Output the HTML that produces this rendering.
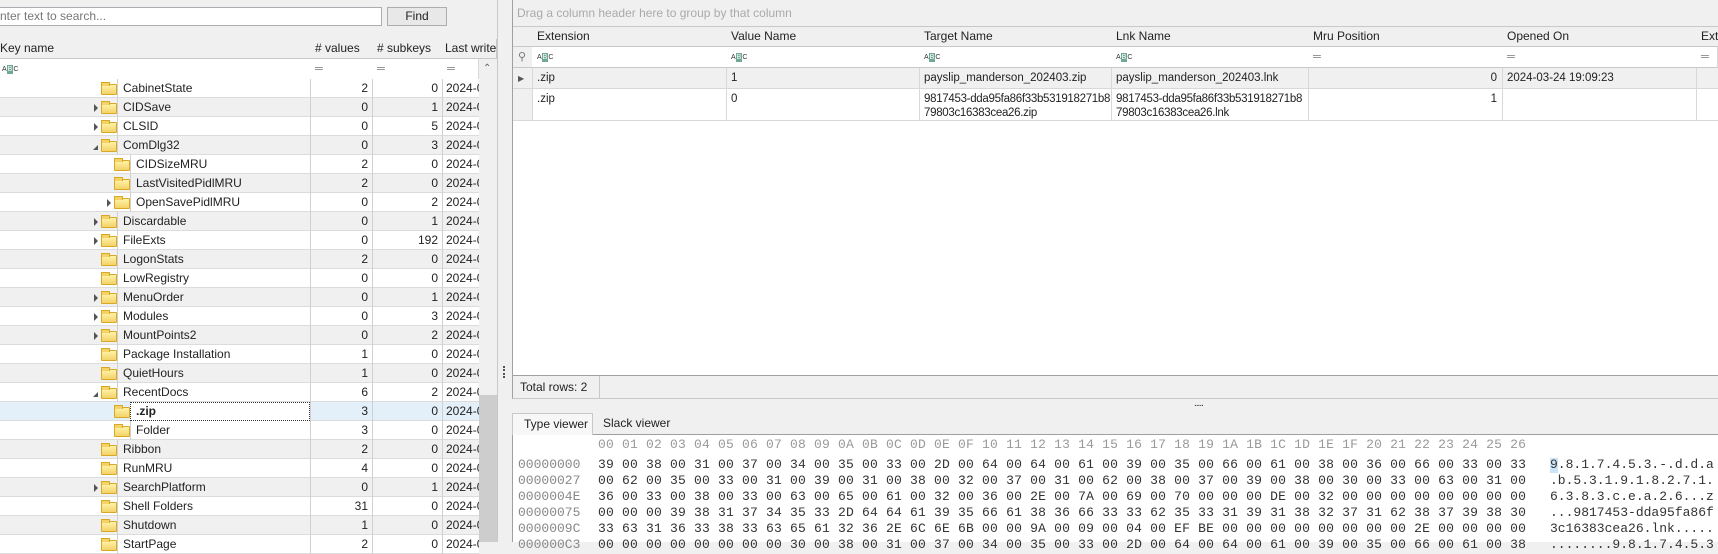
<!DOCTYPE html>
<html><head><meta charset="utf-8"><style>
*{margin:0;padding:0;box-sizing:border-box}
body{width:1718px;height:542px;overflow:hidden;background:#f0f0f0;font-family:"Liberation Sans",sans-serif;font-size:12px;color:#222;position:relative}
.a{position:absolute;white-space:nowrap}
.row{position:absolute;left:0;width:479px;height:19px;border-bottom:1px solid #dcdcdc}
.row .c{position:absolute;top:0;height:19px;line-height:18px;border-left:1px solid #d0d0d0;overflow:hidden;white-space:nowrap}
.fold{position:absolute;top:5px;width:16px;height:11px;background:linear-gradient(#fff3a8,#f3d268);border:1px solid #d9a925;border-radius:1px}
.fold:before{content:"";position:absolute;left:-1px;top:-3px;width:7px;height:3px;background:#f3d268;border:1px solid #d9a925;border-bottom:none}
.tri{position:absolute;top:6px;width:0;height:0;border-top:4px solid transparent;border-bottom:4px solid transparent;border-left:4px solid #555}
.tri.o{border:none;top:9px;width:0;height:0;border-left:5px solid transparent;border-bottom:5px solid #555}
.hdr{position:absolute;background:#f0f0f0;border-right:1px solid #c8c8c8;border-bottom:1px solid #c8c8c8;height:20px;line-height:19px;padding-left:5px;color:#222;overflow:hidden;white-space:nowrap}
.flt{position:absolute;background:#fff;border-right:1px solid #d8d8d8;border-bottom:1px solid #c8c8c8;height:21px;line-height:20px;padding-left:5px;color:#777;font-size:11px;overflow:hidden}
.abc{position:relative;display:inline-block;font-size:7px;line-height:9px;height:9px;color:#333;vertical-align:middle;font-family:"Liberation Sans",sans-serif}
.abc b{display:inline-block;background:#6fa893;color:#fff;padding:0 1px;font-weight:normal;line-height:9px;height:9px}
.g{position:absolute;border-right:1px solid #d8d8d8;border-bottom:1px solid #d8d8d8;padding:3px 5px;line-height:14px;font-size:11.5px;overflow:hidden;white-space:nowrap}
.mono{font-family:"Liberation Mono",monospace;font-size:13px;white-space:pre;position:absolute;color:#333;letter-spacing:0.2px}
</style></head><body>
<!-- left search -->
<div class="a" style="left:0;top:7px;width:382px;height:19px;background:#fff;border:1px solid #abadb3;border-left:none;color:#777;line-height:17px">nter text to search...</div>
<div class="a" style="left:387px;top:7px;width:60px;height:19px;background:#e8e8e8;border:1px solid #adadad;text-align:center;line-height:17px">Find</div>
<!-- left header -->
<div class="hdr" style="left:0;top:39px;width:311px;padding-left:0">Key name</div>
<div class="hdr" style="left:310px;top:39px;width:63px">&#35; values</div>
<div class="hdr" style="left:372px;top:39px;width:71px">&#35; subkeys</div>
<div class="hdr" style="left:442px;top:39px;width:55px;padding-left:3px">Last write</div>
<div class="flt" style="left:0;top:59px;width:311px;padding-left:2px"><span class="abc">A<b>B</b>C</span></div>
<div class="flt" style="left:310px;top:59px;width:63px">═</div>
<div class="flt" style="left:372px;top:59px;width:71px">═</div>
<div class="flt" style="left:442px;top:59px;width:37px">═</div>

<div id="tree">
<div class="row" style="top:79px;background:#fff"><div class="fold" style="left:101px"></div><div class="c" style="left:117px;width:193px;padding-left:5px">CabinetState</div><div class="c" style="left:310px;width:62px;text-align:right;padding-right:4px">2</div><div class="c" style="left:372px;width:70px;text-align:right;padding-right:4px">0</div><div class="c" style="left:442px;width:37px;padding-left:3px">2024-0</div></div>
<div class="row" style="top:98px;background:#f0f0f0"><div class="tri" style="left:94px"></div><div class="fold" style="left:101px"></div><div class="c" style="left:117px;width:193px;padding-left:5px">CIDSave</div><div class="c" style="left:310px;width:62px;text-align:right;padding-right:4px">0</div><div class="c" style="left:372px;width:70px;text-align:right;padding-right:4px">1</div><div class="c" style="left:442px;width:37px;padding-left:3px">2024-0</div></div>
<div class="row" style="top:117px;background:#fff"><div class="tri" style="left:94px"></div><div class="fold" style="left:101px"></div><div class="c" style="left:117px;width:193px;padding-left:5px">CLSID</div><div class="c" style="left:310px;width:62px;text-align:right;padding-right:4px">0</div><div class="c" style="left:372px;width:70px;text-align:right;padding-right:4px">5</div><div class="c" style="left:442px;width:37px;padding-left:3px">2024-0</div></div>
<div class="row" style="top:136px;background:#f0f0f0"><div class="tri o" style="left:93px"></div><div class="fold" style="left:101px"></div><div class="c" style="left:117px;width:193px;padding-left:5px">ComDlg32</div><div class="c" style="left:310px;width:62px;text-align:right;padding-right:4px">0</div><div class="c" style="left:372px;width:70px;text-align:right;padding-right:4px">3</div><div class="c" style="left:442px;width:37px;padding-left:3px">2024-0</div></div>
<div class="row" style="top:155px;background:#fff"><div class="fold" style="left:114px"></div><div class="c" style="left:130px;width:180px;padding-left:5px">CIDSizeMRU</div><div class="c" style="left:310px;width:62px;text-align:right;padding-right:4px">2</div><div class="c" style="left:372px;width:70px;text-align:right;padding-right:4px">0</div><div class="c" style="left:442px;width:37px;padding-left:3px">2024-0</div></div>
<div class="row" style="top:174px;background:#f0f0f0"><div class="fold" style="left:114px"></div><div class="c" style="left:130px;width:180px;padding-left:5px">LastVisitedPidlMRU</div><div class="c" style="left:310px;width:62px;text-align:right;padding-right:4px">2</div><div class="c" style="left:372px;width:70px;text-align:right;padding-right:4px">0</div><div class="c" style="left:442px;width:37px;padding-left:3px">2024-0</div></div>
<div class="row" style="top:193px;background:#fff"><div class="tri" style="left:107px"></div><div class="fold" style="left:114px"></div><div class="c" style="left:130px;width:180px;padding-left:5px">OpenSavePidlMRU</div><div class="c" style="left:310px;width:62px;text-align:right;padding-right:4px">0</div><div class="c" style="left:372px;width:70px;text-align:right;padding-right:4px">2</div><div class="c" style="left:442px;width:37px;padding-left:3px">2024-0</div></div>
<div class="row" style="top:212px;background:#f0f0f0"><div class="tri" style="left:94px"></div><div class="fold" style="left:101px"></div><div class="c" style="left:117px;width:193px;padding-left:5px">Discardable</div><div class="c" style="left:310px;width:62px;text-align:right;padding-right:4px">0</div><div class="c" style="left:372px;width:70px;text-align:right;padding-right:4px">1</div><div class="c" style="left:442px;width:37px;padding-left:3px">2024-0</div></div>
<div class="row" style="top:231px;background:#fff"><div class="tri" style="left:94px"></div><div class="fold" style="left:101px"></div><div class="c" style="left:117px;width:193px;padding-left:5px">FileExts</div><div class="c" style="left:310px;width:62px;text-align:right;padding-right:4px">0</div><div class="c" style="left:372px;width:70px;text-align:right;padding-right:4px">192</div><div class="c" style="left:442px;width:37px;padding-left:3px">2024-0</div></div>
<div class="row" style="top:250px;background:#f0f0f0"><div class="fold" style="left:101px"></div><div class="c" style="left:117px;width:193px;padding-left:5px">LogonStats</div><div class="c" style="left:310px;width:62px;text-align:right;padding-right:4px">2</div><div class="c" style="left:372px;width:70px;text-align:right;padding-right:4px">0</div><div class="c" style="left:442px;width:37px;padding-left:3px">2024-0</div></div>
<div class="row" style="top:269px;background:#fff"><div class="fold" style="left:101px"></div><div class="c" style="left:117px;width:193px;padding-left:5px">LowRegistry</div><div class="c" style="left:310px;width:62px;text-align:right;padding-right:4px">0</div><div class="c" style="left:372px;width:70px;text-align:right;padding-right:4px">0</div><div class="c" style="left:442px;width:37px;padding-left:3px">2024-0</div></div>
<div class="row" style="top:288px;background:#f0f0f0"><div class="tri" style="left:94px"></div><div class="fold" style="left:101px"></div><div class="c" style="left:117px;width:193px;padding-left:5px">MenuOrder</div><div class="c" style="left:310px;width:62px;text-align:right;padding-right:4px">0</div><div class="c" style="left:372px;width:70px;text-align:right;padding-right:4px">1</div><div class="c" style="left:442px;width:37px;padding-left:3px">2024-0</div></div>
<div class="row" style="top:307px;background:#fff"><div class="tri" style="left:94px"></div><div class="fold" style="left:101px"></div><div class="c" style="left:117px;width:193px;padding-left:5px">Modules</div><div class="c" style="left:310px;width:62px;text-align:right;padding-right:4px">0</div><div class="c" style="left:372px;width:70px;text-align:right;padding-right:4px">3</div><div class="c" style="left:442px;width:37px;padding-left:3px">2024-0</div></div>
<div class="row" style="top:326px;background:#f0f0f0"><div class="tri" style="left:94px"></div><div class="fold" style="left:101px"></div><div class="c" style="left:117px;width:193px;padding-left:5px">MountPoints2</div><div class="c" style="left:310px;width:62px;text-align:right;padding-right:4px">0</div><div class="c" style="left:372px;width:70px;text-align:right;padding-right:4px">2</div><div class="c" style="left:442px;width:37px;padding-left:3px">2024-0</div></div>
<div class="row" style="top:345px;background:#fff"><div class="fold" style="left:101px"></div><div class="c" style="left:117px;width:193px;padding-left:5px">Package Installation</div><div class="c" style="left:310px;width:62px;text-align:right;padding-right:4px">1</div><div class="c" style="left:372px;width:70px;text-align:right;padding-right:4px">0</div><div class="c" style="left:442px;width:37px;padding-left:3px">2024-0</div></div>
<div class="row" style="top:364px;background:#f0f0f0"><div class="fold" style="left:101px"></div><div class="c" style="left:117px;width:193px;padding-left:5px">QuietHours</div><div class="c" style="left:310px;width:62px;text-align:right;padding-right:4px">1</div><div class="c" style="left:372px;width:70px;text-align:right;padding-right:4px">0</div><div class="c" style="left:442px;width:37px;padding-left:3px">2024-0</div></div>
<div class="row" style="top:383px;background:#fff"><div class="tri o" style="left:93px"></div><div class="fold" style="left:101px"></div><div class="c" style="left:117px;width:193px;padding-left:5px">RecentDocs</div><div class="c" style="left:310px;width:62px;text-align:right;padding-right:4px">6</div><div class="c" style="left:372px;width:70px;text-align:right;padding-right:4px">2</div><div class="c" style="left:442px;width:37px;padding-left:3px">2024-0</div></div>
<div class="row" style="top:402px;background:#e3eff9"><div class="fold" style="left:114px"></div><div class="c" style="left:130px;width:180px;padding-left:5px;font-weight:bold;background:#fff;border:1px dotted #333;line-height:16px">.zip</div><div class="c" style="left:310px;width:62px;text-align:right;padding-right:4px">3</div><div class="c" style="left:372px;width:70px;text-align:right;padding-right:4px">0</div><div class="c" style="left:442px;width:37px;padding-left:3px">2024-0</div></div>
<div class="row" style="top:421px;background:#fff"><div class="fold" style="left:114px"></div><div class="c" style="left:130px;width:180px;padding-left:5px">Folder</div><div class="c" style="left:310px;width:62px;text-align:right;padding-right:4px">3</div><div class="c" style="left:372px;width:70px;text-align:right;padding-right:4px">0</div><div class="c" style="left:442px;width:37px;padding-left:3px">2024-0</div></div>
<div class="row" style="top:440px;background:#f0f0f0"><div class="fold" style="left:101px"></div><div class="c" style="left:117px;width:193px;padding-left:5px">Ribbon</div><div class="c" style="left:310px;width:62px;text-align:right;padding-right:4px">2</div><div class="c" style="left:372px;width:70px;text-align:right;padding-right:4px">0</div><div class="c" style="left:442px;width:37px;padding-left:3px">2024-0</div></div>
<div class="row" style="top:459px;background:#fff"><div class="fold" style="left:101px"></div><div class="c" style="left:117px;width:193px;padding-left:5px">RunMRU</div><div class="c" style="left:310px;width:62px;text-align:right;padding-right:4px">4</div><div class="c" style="left:372px;width:70px;text-align:right;padding-right:4px">0</div><div class="c" style="left:442px;width:37px;padding-left:3px">2024-0</div></div>
<div class="row" style="top:478px;background:#f0f0f0"><div class="tri" style="left:94px"></div><div class="fold" style="left:101px"></div><div class="c" style="left:117px;width:193px;padding-left:5px">SearchPlatform</div><div class="c" style="left:310px;width:62px;text-align:right;padding-right:4px">0</div><div class="c" style="left:372px;width:70px;text-align:right;padding-right:4px">1</div><div class="c" style="left:442px;width:37px;padding-left:3px">2024-0</div></div>
<div class="row" style="top:497px;background:#fff"><div class="fold" style="left:101px"></div><div class="c" style="left:117px;width:193px;padding-left:5px">Shell Folders</div><div class="c" style="left:310px;width:62px;text-align:right;padding-right:4px">31</div><div class="c" style="left:372px;width:70px;text-align:right;padding-right:4px">0</div><div class="c" style="left:442px;width:37px;padding-left:3px">2024-0</div></div>
<div class="row" style="top:516px;background:#f0f0f0"><div class="fold" style="left:101px"></div><div class="c" style="left:117px;width:193px;padding-left:5px">Shutdown</div><div class="c" style="left:310px;width:62px;text-align:right;padding-right:4px">1</div><div class="c" style="left:372px;width:70px;text-align:right;padding-right:4px">0</div><div class="c" style="left:442px;width:37px;padding-left:3px">2024-0</div></div>
<div class="row" style="top:535px;background:#fff"><div class="fold" style="left:101px"></div><div class="c" style="left:117px;width:193px;padding-left:5px">StartPage</div><div class="c" style="left:310px;width:62px;text-align:right;padding-right:4px">2</div><div class="c" style="left:372px;width:70px;text-align:right;padding-right:4px">0</div><div class="c" style="left:442px;width:37px;padding-left:3px">2024-0</div></div>
</div>
<!-- left scrollbar -->
<div class="a" style="left:479px;top:59px;width:18px;height:483px;background:#f0f0f0"></div>
<div class="a" style="left:483px;top:63px;font-size:10px;color:#666">&#8963;</div>
<div class="a" style="left:479px;top:395px;width:18px;height:147px;background:#cdcdcd"></div>
<!-- splitter -->
<div class="a" style="left:497px;top:0;width:1px;height:542px;background:#c8c8c8"></div>
<div class="a" style="left:503px;top:366px;width:2px;height:12px;border-left:2px dotted #555"></div>
<!-- right grid -->
<div class="a" style="left:512px;top:0;width:1206px;height:375px;background:#fff;border-left:1px solid #a0a0a0"></div>
<div class="a" style="left:513px;top:0;width:1205px;height:27px;background:#f0f0f0;border-bottom:1px solid #c8c8c8;color:#aaa;padding:6px 0 0 4px">Drag a column header here to group by that column</div>
<div class="hdr" style="left:513px;top:27px;width:20px"></div>
<div class="hdr" style="left:532px;top:27px;width:195px">Extension</div>
<div class="hdr" style="left:726px;top:27px;width:194px">Value Name</div>
<div class="hdr" style="left:919px;top:27px;width:193px">Target Name</div>
<div class="hdr" style="left:1111px;top:27px;width:198px">Lnk Name</div>
<div class="hdr" style="left:1308px;top:27px;width:195px">Mru Position</div>
<div class="hdr" style="left:1502px;top:27px;width:195px">Opened On</div>
<div class="hdr" style="left:1696px;top:27px;width:22px;border-right:none">Exte</div>
<div class="flt" style="left:513px;top:47px;width:20px;padding-left:5px;background:#f0f0f0">&#9906;</div>
<div class="flt" style="left:532px;top:47px;width:195px"><span class="abc">A<b>B</b>C</span></div>
<div class="flt" style="left:726px;top:47px;width:194px"><span class="abc">A<b>B</b>C</span></div>
<div class="flt" style="left:919px;top:47px;width:193px"><span class="abc">A<b>B</b>C</span></div>
<div class="flt" style="left:1111px;top:47px;width:198px"><span class="abc">A<b>B</b>C</span></div>
<div class="flt" style="left:1308px;top:47px;width:195px">═</div>
<div class="flt" style="left:1502px;top:47px;width:195px">═</div>
<div class="flt" style="left:1696px;top:47px;width:22px">═</div>
<div class="a" style="left:513px;top:68px;width:1205px;height:21px;background:#f0f0f0"></div>
<div class="g" style="left:513px;top:68px;width:20px;height:21px;background:#f0f0f0"><span style="font-size:8px;color:#555">&#9654;</span></div>
<div class="g" style="left:532px;top:68px;width:195px;height:21px">.zip</div>
<div class="g" style="left:726px;top:68px;width:194px;height:21px">1</div>
<div class="g" style="left:919px;top:68px;width:193px;height:21px">payslip_manderson_202403.zip</div>
<div class="g" style="left:1111px;top:68px;width:198px;height:21px">payslip_manderson_202403.lnk</div>
<div class="g" style="left:1308px;top:68px;width:195px;height:21px;text-align:right">0</div>
<div class="g" style="left:1502px;top:68px;width:195px;height:21px">2024-03-24 19:09:23</div>
<div class="g" style="left:1696px;top:68px;width:22px;height:21px;border-right:none"></div>
<div class="g" style="left:513px;top:89px;width:20px;height:32px;background:#f0f0f0"></div>
<div class="g" style="left:532px;top:89px;width:195px;height:32px">.zip</div>
<div class="g" style="left:726px;top:89px;width:194px;height:32px">0</div>
<div class="g" style="left:919px;top:89px;width:193px;height:32px;letter-spacing:-0.3px;padding-right:0">9817453-dda95fa86f33b531918271b8<br>79803c16383cea26.zip</div>
<div class="g" style="left:1111px;top:89px;width:198px;height:32px;letter-spacing:-0.3px;padding-right:0">9817453-dda95fa86f33b531918271b8<br>79803c16383cea26.lnk</div>
<div class="g" style="left:1308px;top:89px;width:195px;height:32px;text-align:right">1</div>
<div class="g" style="left:1502px;top:89px;width:195px;height:32px"></div>
<div class="g" style="left:1696px;top:89px;width:22px;height:32px;border-right:none"></div>
<!-- total rows -->
<div class="a" style="left:512px;top:375px;width:1206px;height:24px;background:#f0f0f0;border-top:1px solid #a0a0a0;border-bottom:1px solid #c8c8c8;border-left:1px solid #a0a0a0"></div>
<div class="a" style="left:512px;top:376px;width:88px;height:22px;border-right:1px solid #c8c8c8;line-height:22px;padding-left:8px">Total rows: 2</div>
<div class="a" style="left:1194px;top:398px;font-size:10px;color:#333;letter-spacing:-1px">.....</div>
<!-- tabs -->
<div class="a" style="left:512px;top:413px;width:81px;height:22px;background:#f7f7f7;border:1px solid #c8c8c8;border-bottom:none;line-height:21px;padding-left:11px;z-index:2">Type viewer</div>
<div class="a" style="left:603px;top:413px;line-height:21px">Slack viewer</div>
<div class="a" style="left:512px;top:434px;width:1206px;height:108px;background:#fff;border-top:1px solid #a0a0a0;border-left:1px solid #a0a0a0"></div>
<div class="mono" style="left:598px;top:437px;color:#999;line-height:16px">00 01 02 03 04 05 06 07 08 09 0A 0B 0C 0D 0E 0F 10 11 12 13 14 15 16 17 18 19 1A 1B 1C 1D 1E 1F 20 21 22 23 24 25 26</div>
<div class="mono" style="left:518px;top:457px;color:#888;line-height:16px;letter-spacing:0">00000000
00000027
0000004E
00000075
0000009C
000000C3</div>
<div class="mono" style="left:598px;top:457px;line-height:16px">39 00 38 00 31 00 37 00 34 00 35 00 33 00 2D 00 64 00 64 00 61 00 39 00 35 00 66 00 61 00 38 00 36 00 66 00 33 00 33
00 62 00 35 00 33 00 31 00 39 00 31 00 38 00 32 00 37 00 31 00 62 00 38 00 37 00 39 00 38 00 30 00 33 00 63 00 31 00
36 00 33 00 38 00 33 00 63 00 65 00 61 00 32 00 36 00 2E 00 7A 00 69 00 70 00 00 00 DE 00 32 00 00 00 00 00 00 00 00
00 00 00 39 38 31 37 34 35 33 2D 64 64 61 39 35 66 61 38 36 66 33 33 62 35 33 31 39 31 38 32 37 31 62 38 37 39 38 30
33 63 31 36 33 38 33 63 65 61 32 36 2E 6C 6E 6B 00 00 9A 00 09 00 04 00 EF BE 00 00 00 00 00 00 00 00 2E 00 00 00 00
00 00 00 00 00 00 00 00 30 00 38 00 31 00 37 00 34 00 35 00 33 00 2D 00 64 00 64 00 61 00 39 00 35 00 66 00 61 00 38</div>
<div class="a" style="left:1550px;top:458px;width:8px;height:15px;background:#cce4f7"></div>
<div class="mono" style="left:1550px;top:457px;line-height:16px;letter-spacing:0">9.8.1.7.4.5.3.-.d.d.a
.b.5.3.1.9.1.8.2.7.1.
6.3.8.3.c.e.a.2.6...z
...9817453-dda95fa86f
3c16383cea26.lnk.....
........9.8.1.7.4.5.3</div>
</body></html>
